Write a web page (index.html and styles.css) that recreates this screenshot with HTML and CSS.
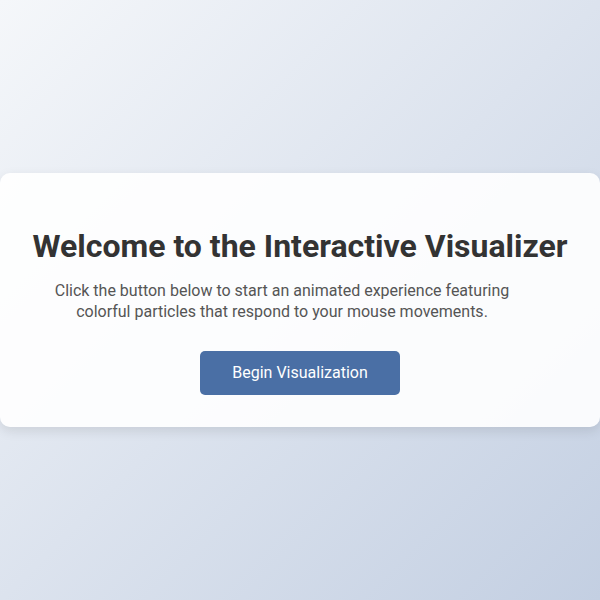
FILE: index.html
```html
<!DOCTYPE html>
<html lang="en">
<head>
  <meta charset="utf-8" />
  <title>Interactive Visualizer</title>
  <meta name="viewport" content="width=device-width, initial-scale=1">
  <link rel="stylesheet" href="styles.css">
</head>
<body>

<div class="intro">
  <h1>Welcome to the Interactive Visualizer</h1>
  <p>Click the button below to start an animated experience featuring colorful particles that respond to your mouse movements.</p>
  <button class="start">Begin Visualization</button>
</div>

</body>
</html>
```

FILE: styles.css
```css
body, html {
  height:100%;
  width:100%;
  margin:0;
}
body {
  display:flex;
  justify-content:center;
  align-items:center;
  font-family:Roboto, "Liberation Sans", sans-serif;
  background:linear-gradient(135deg, #f5f7fa 0%, #c3cfe2 100%);
}
.intro {
  width:100%;
  box-sizing:border-box;
  padding:32px;
  text-align:center;
  background:rgba(255, 255, 255, 0.9);
  border-radius:10px;
  box-shadow:0 4px 12px rgba(0, 0, 0, 0.1);
}
.intro h1 {
  margin:0 0 16px;
  padding-top:22px;
  font-size:32px;
  color:#333;
}
.intro p {
  max-width:500px;
  margin:0 0 28px;
  font-size:16px;
  line-height:1.3;
  color:#555;
}
.start {
  width:200px;
  height:44px;
  border:none;
  border-radius:5px;
  background:#4a6fa5;
  color:#fff;
  font-family:inherit;
  font-size:16px;
  cursor:pointer;
}
```
